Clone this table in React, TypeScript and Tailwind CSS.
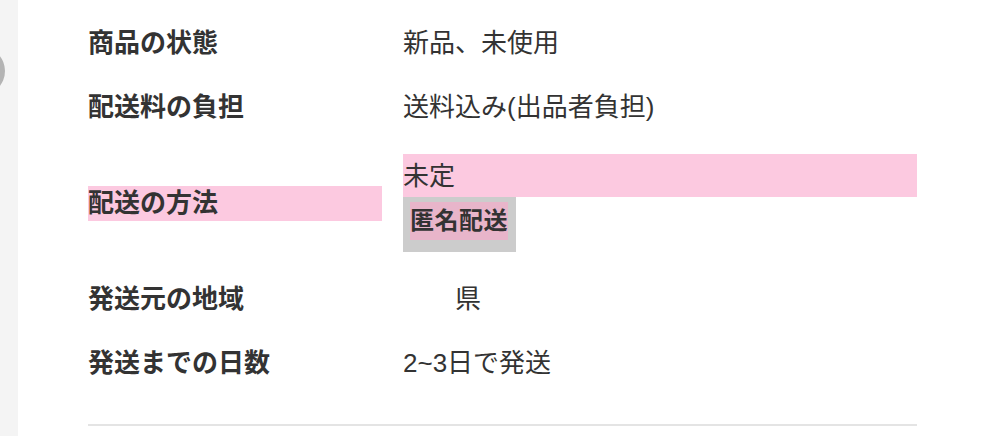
import React from "react"

// ─── Item detail rows ───────────────────────────────────────────────────────

type Row = { label: string; value: React.ReactNode; tall?: boolean }

const font = "font-['Liberation_Sans','Noto_Sans_CJK_JP',sans-serif]"

function ShippingMethod() {
  return (
    <div className="flex flex-col items-start w-full">
      <div className="w-full bg-[#fcc9e0] h-[43px] flex items-center">未定</div>
      <div className="bg-[#cccccc] pl-[7px] pr-[8px] pt-[5px] pb-[12px]">
        <div className="bg-[#e8b5ca] font-bold h-[38px] flex items-center text-[24px] tracking-[0.5px]">匿名配送</div>
      </div>
    </div>
  )
}

const rows: Row[] = [
  { label: "商品の状態", value: "新品、未使用" },
  { label: "配送料の負担", value: "送料込み(出品者負担)" },
  { label: "配送の方法", value: <ShippingMethod />, tall: true },
  {
    label: "発送元の地域",
    value: (
      <span>
        <span className="text-white">鹿児</span>県
      </span>
    ),
  },
  { label: "発送までの日数", value: "2~3日で発送" },
]

export default function App() {
  return (
    <div className={`w-[999px] h-[436px] overflow-hidden flex bg-white text-[#333333] ${font}`}>
      {/* side rail */}
      <div className="relative w-[18px] shrink-0 bg-[#f4f4f4] overflow-hidden">
        <div className="absolute left-[-43px] top-[47px] w-12 h-12 rounded-full bg-[#b4b4b4]" />
      </div>

      <div className="flex-1 pl-[70px] pt-[11px]">
        <div className="w-[829px]">
          {rows.map((r) => (
            <div key={r.label} className={`flex items-center ${r.tall ? "py-[15px]" : "h-16"}`}>
              <div className="w-[315px] shrink-0">
                <div
                  className={`w-[294px] h-[35px] flex items-center text-[26px] font-bold leading-none ${
                    r.tall ? "bg-[#fcc9e0]" : ""
                  }`}
                >
                  {r.label}
                </div>
              </div>
              <div className="flex-1 text-[26px] leading-none">{r.value}</div>
            </div>
          ))}
          <div className="mt-[29px] h-[2px] bg-[#e4e4e4]" />
        </div>
      </div>
    </div>
  )
}
